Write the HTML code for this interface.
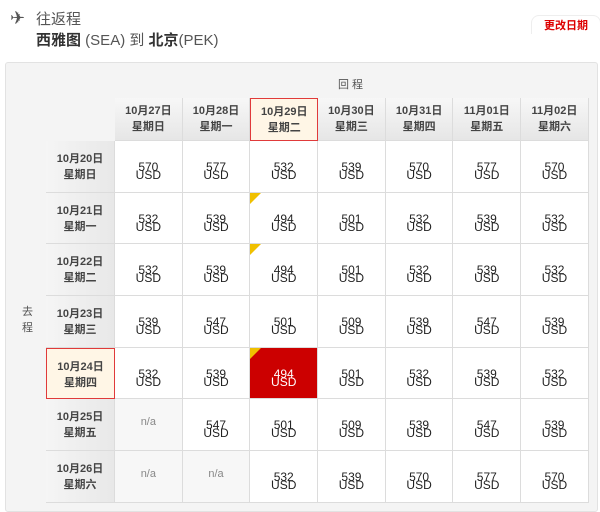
<!DOCTYPE html><html><head><meta charset="utf-8"><style>
*{box-sizing:border-box;margin:0;padding:0}
body{width:600px;height:503px;overflow:hidden;background:#fff;font-family:"Liberation Sans","Noto Sans CJK SC",sans-serif;position:relative;color:#333}
.a{position:absolute}
.panel{left:5px;top:62px;width:593px;height:450px;background:#f4f4f4;border:1px solid #e2e2e2;border-radius:3px}
.g{left:46px;top:98px;display:grid;grid-template-columns:69px repeat(7,67.7px);grid-template-rows:43px repeat(7,51.7px)}
.g div{border-right:1px solid #dcdcdc;border-bottom:1px solid #dcdcdc;text-align:center;font-size:11px;position:relative}
.h{background:linear-gradient(#f7f7f7,#e6e6e6);font-weight:bold;color:#444;line-height:16px;padding-top:5px}
.rh{background:linear-gradient(90deg,#f5f5f5,#e8e8e8);font-weight:bold;color:#444;line-height:16px;padding-top:10px}
.c{background:#fff;padding-top:22px;line-height:8px;color:#222;font-size:12px!important}
.n{background:#f7f7f7;color:#888;padding-top:17px}
.e{background:transparent!important;border:none!important}
.sel{background:#fff6e6!important;border:1px solid #e03a3a!important}
.red{background:#cc0000!important;color:#fff!important}
.t::before{content:"";position:absolute;left:0;top:0;border-top:11px solid #f0c000;border-right:11px solid transparent}
</style></head><body>
<div class="a" style="left:10px;top:8px;font-size:18px;color:#555">✈</div>
<div class="a" style="left:36px;top:8px;font-size:15px;color:#555">往返程</div>
<div class="a" style="left:36px;top:29px;font-size:15px;color:#555"><b style="color:#333">西雅图</b> (SEA) 到 <b style="color:#333">北京</b>(PEK)</div>
<div class="a" style="left:531px;top:15px;width:70px;height:19px;border:1px solid #eee;border-bottom:none;border-radius:8px 8px 0 0;color:#d00;font-size:11px;font-weight:bold;text-align:center;line-height:20px">更改日期</div>
<div class="a panel"></div>
<div class="a" style="left:338px;top:76px;font-size:11px;color:#555;letter-spacing:3px">回程</div>
<div class="a" style="left:22px;top:304px;width:14px;font-size:11px;color:#555;line-height:16px">去程</div>
<div class="a g">
<div class="e"></div>
<div class="h">10月27日<br>星期日</div><div class="h">10月28日<br>星期一</div><div class="h sel">10月29日<br>星期二</div><div class="h">10月30日<br>星期三</div><div class="h">10月31日<br>星期四</div><div class="h">11月01日<br>星期五</div><div class="h">11月02日<br>星期六</div>
<div class="rh">10月20日<br>星期日</div><div class="c">570<br>USD</div><div class="c">577<br>USD</div><div class="c">532<br>USD</div><div class="c">539<br>USD</div><div class="c">570<br>USD</div><div class="c">577<br>USD</div><div class="c">570<br>USD</div>
<div class="rh">10月21日<br>星期一</div><div class="c">532<br>USD</div><div class="c">539<br>USD</div><div class="c t">494<br>USD</div><div class="c">501<br>USD</div><div class="c">532<br>USD</div><div class="c">539<br>USD</div><div class="c">532<br>USD</div>
<div class="rh">10月22日<br>星期二</div><div class="c">532<br>USD</div><div class="c">539<br>USD</div><div class="c t">494<br>USD</div><div class="c">501<br>USD</div><div class="c">532<br>USD</div><div class="c">539<br>USD</div><div class="c">532<br>USD</div>
<div class="rh">10月23日<br>星期三</div><div class="c">539<br>USD</div><div class="c">547<br>USD</div><div class="c">501<br>USD</div><div class="c">509<br>USD</div><div class="c">539<br>USD</div><div class="c">547<br>USD</div><div class="c">539<br>USD</div>
<div class="rh sel">10月24日<br>星期四</div><div class="c">532<br>USD</div><div class="c">539<br>USD</div><div class="c t red">494<br>USD</div><div class="c">501<br>USD</div><div class="c">532<br>USD</div><div class="c">539<br>USD</div><div class="c">532<br>USD</div>
<div class="rh">10月25日<br>星期五</div><div class="n">n/a</div><div class="c">547<br>USD</div><div class="c">501<br>USD</div><div class="c">509<br>USD</div><div class="c">539<br>USD</div><div class="c">547<br>USD</div><div class="c">539<br>USD</div>
<div class="rh">10月26日<br>星期六</div><div class="n">n/a</div><div class="n">n/a</div><div class="c">532<br>USD</div><div class="c">539<br>USD</div><div class="c">570<br>USD</div><div class="c">577<br>USD</div><div class="c">570<br>USD</div>
</div>
</body></html>
